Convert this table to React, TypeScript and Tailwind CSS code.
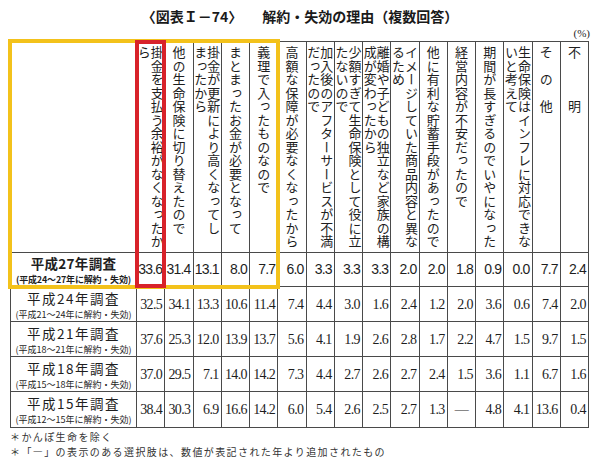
const jp = "font-['Noto_Sans_CJK_JP',sans-serif]";

// header captions, pre-broken as in the printed table
const heads: string[][] = [
  ["掛金を支払う余裕がなくなったか", "ら"],
  ["他の生命保険に切り替えたので"],
  ["掛金が更新により高くなってし", "まったから"],
  ["まとまったお金が必要となって"],
  ["義理で入ったものなので"],
  ["高額な保障が必要なくなったから"],
  ["加入後のアフターサービスが不満", "だったので"],
  ["少額すぎて生命保険として役に立", "たないので"],
  ["離婚や子どもの独立など家族の構", "成が変わったから"],
  ["イメージしていた商品内容と異な", "るため"],
  ["他に有利な貯蓄手段があったので"],
  ["経営内容が不安だったので"],
  ["期間が長すぎるのでいやになった"],
  ["生命保険はインフレに対応できな", "いと考えて"],
  ["そ　の　他"],
  ["不　　　明"],
];

type Row = { year: string; span: string; values: string[]; latest?: boolean };

const rows: Row[] = [
  {
    year: "平成27年調査",
    span: "(平成24～27年に解約・失効)",
    latest: true,
    values: ["33.6", "31.4", "13.1", "8.0", "7.7", "6.0", "3.3", "3.3", "3.3", "2.0", "2.0", "1.8", "0.9", "0.0", "7.7", "2.4"],
  },
  {
    year: "平成24年調査",
    span: "(平成21～24年に解約・失効)",
    values: ["32.5", "34.1", "13.3", "10.6", "11.4", "7.4", "4.4", "3.0", "1.6", "2.4", "1.2", "2.0", "3.6", "0.6", "7.4", "2.0"],
  },
  {
    year: "平成21年調査",
    span: "(平成18～21年に解約・失効)",
    values: ["37.6", "25.3", "12.0", "13.9", "13.7", "5.6", "4.1", "1.9", "2.6", "2.8", "1.7", "2.2", "4.7", "1.5", "9.7", "1.5"],
  },
  {
    year: "平成18年調査",
    span: "(平成15～18年に解約・失効)",
    values: ["37.0", "29.5", "7.1", "14.0", "14.2", "7.3", "4.4", "2.7", "2.6", "2.7", "2.4", "1.5", "3.6", "1.1", "6.7", "1.6"],
  },
  {
    year: "平成15年調査",
    span: "(平成12～15年に解約・失効)",
    values: ["38.4", "30.3", "6.9", "16.6", "14.2", "6.0", "5.4", "2.6", "2.5", "2.7", "1.3", "—", "4.8", "4.1", "13.6", "0.4"],
  },
];

export default function App() {
  return (
    <div className={`w-[600px] h-[460px] bg-white text-[#1e1e1e] overflow-hidden ${jp}`}>
      {/* title */}
      <div className="pt-[7px] h-[25px] flex justify-center gap-[20px] text-[14px] font-bold leading-[18px] text-[#1a1a1a]">
        <span>〈図表Ｉ－74〉</span>
        <span>解約・失効の理由（複数回答）</span>
      </div>
      <div className="h-[16px] pr-[10px] text-right text-[11px] leading-[16px] font-['Liberation_Serif',serif]">(%)</div>

      {/* table */}
      <div className="relative ml-[10px] w-[579px] grid grid-cols-[125px_repeat(16,minmax(0,1fr))] grid-rows-[210px_33px_34px_34px_34px_35px] gap-px p-px bg-[#4a4a4a]">
        <div className="bg-white" />
        {heads.map((lines, i) => (
          <div key={i} className="bg-white flex justify-center pt-[4px]">
            <div className="[writing-mode:vertical-rl] text-[13px] leading-[13px] tracking-[0.5px]">
              {lines.map((l, j) => (
                <span key={j}>
                  {l}
                  {j < lines.length - 1 && <br />}
                </span>
              ))}
            </div>
          </div>
        ))}

        {rows.map((r) => (
          <div key={r.year} className="contents">
            <div className="bg-white flex flex-col items-center justify-center whitespace-nowrap">
              <div
                className={
                  r.latest
                    ? "text-[13.5px] font-bold leading-[20px] tracking-[0.3px]"
                    : "text-[13.5px] leading-[20px] tracking-[1.5px]"
                }
              >
                {r.year}
              </div>
              <div
                className={
                  r.latest
                    ? "text-[9px] font-bold leading-[13px] tracking-[-0.2px]"
                    : "text-[9px] leading-[13px]"
                }
              >
                {r.span}
              </div>
            </div>
            {r.values.map((v, i) => (
              <div
                key={i}
                className={
                  "bg-white flex items-center text-[14px] " +
                  (v === "—" ? "justify-center " : "justify-end pr-[2px] ") +
                  (r.latest
                    ? "font-['Liberation_Sans_Narrow','Liberation_Sans',sans-serif] tracking-[-0.8px]"
                    : "font-['Liberation_Serif',serif] tracking-[-0.6px]")
                }
              >
                {v}
              </div>
            ))}
          </div>
        ))}

        {/* highlight frames */}
        <div className="absolute col-start-1 col-end-7 row-start-1 row-end-3 inset-[-3px] border-[4px] border-[#f3c21b] pointer-events-none" />
        <div className="absolute col-start-2 col-end-3 row-start-1 row-end-3 inset-[-2px] border-[4px] border-[#d8222a] pointer-events-none" />
      </div>

      {/* notes */}
      <div className="mt-[2px] pl-[10px] text-[10px] leading-[14.5px] tracking-[1.4px] text-[#333]">
        <div>＊かんぽ生命を除く</div>
        <div>＊「―」の表示のある選択肢は、数値が表記された年より追加されたもの</div>
      </div>
    </div>
  );
}
